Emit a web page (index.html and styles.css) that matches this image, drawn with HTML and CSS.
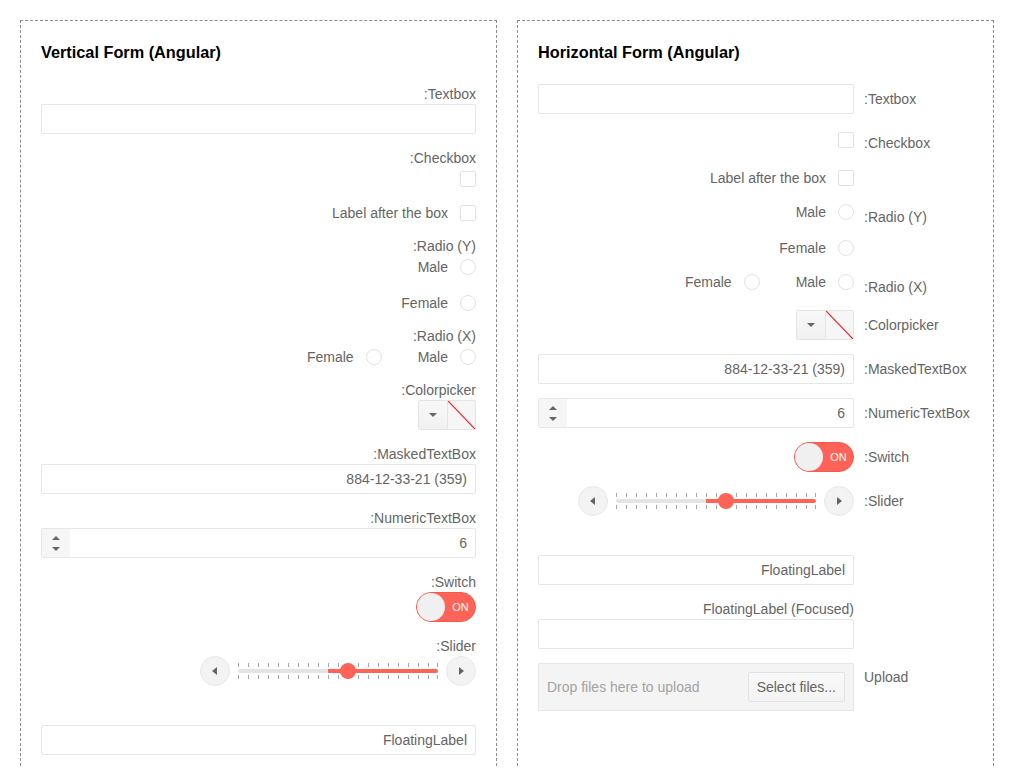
FILE: index.html
```html
<!DOCTYPE html>
<html lang="en">
<head>
<meta charset="utf-8">
<title>Forms (Angular)</title>
<link rel="stylesheet" href="styles.css">
</head>
<body>
<div class="page">

  <section class="panel">
    <h2 class="title">Vertical Form (Angular)</h2>

    <div class="vfield vfield-first">
      <div class="flabel">:Textbox</div>
      <div class="textbox"></div>
    </div>

    <div class="vfield">
      <div class="flabel">:Checkbox</div>
      <div class="choice choice-box"><span class="checkbox"></span></div>
      <div class="choice choice-after"><span>Label after the box</span><span class="checkbox"></span></div>
    </div>

    <div class="vfield vfield-tight">
      <div class="flabel">:Radio (Y)</div>
      <div class="choice choice-first"><span>Male</span><span class="radio"></span></div>
      <div class="choice choice-next"><span>Female</span><span class="radio"></span></div>
    </div>

    <div class="vfield vfield-tight">
      <div class="flabel">:Radio (X)</div>
      <div class="choice-group choice-first">
        <div class="choice"><span>Female</span><span class="radio"></span></div>
        <div class="choice"><span>Male</span><span class="radio"></span></div>
      </div>
    </div>

    <div class="vfield vfield-tight">
      <div class="flabel">:Colorpicker</div>
      <div class="colorpicker">
        <span class="cp-button"><span class="tri-down"></span></span>
        <span class="cp-preview"><svg class="no-color" viewBox="0 0 27 28" preserveAspectRatio="none"><line x1="0" y1="0" x2="27" y2="28" stroke="#ff1a1a" stroke-width="1.2"/></svg></span>
      </div>
    </div>

    <div class="vfield">
      <div class="flabel">:MaskedTextBox</div>
      <div class="textbox">884-12-33-21 (359)</div>
    </div>

    <div class="vfield">
      <div class="flabel">:NumericTextBox</div>
      <div class="numeric">
        <span class="spin"><span class="tri-up"></span><span class="tri-down"></span></span>
        <span class="num-value">6</span>
      </div>
    </div>

    <div class="vfield">
      <div class="flabel">:Switch</div>
      <span class="switch"><span class="knob"></span><span class="switch-label">ON</span></span>
    </div>

    <div class="vfield">
      <div class="flabel">:Slider</div>
      <div class="slider">
        <span class="sbtn"><span class="tri-left"></span></span>
        <div class="strack">
          <div class="ticks"></div>
          <div class="rail"><span class="thumb"></span></div>
          <div class="ticks"></div>
        </div>
        <span class="sbtn"><span class="tri-right"></span></span>
      </div>
    </div>

    <div class="vfield floating">
      <div class="textbox">FloatingLabel</div>
    </div>
  </section>

  <section class="panel">
    <h2 class="title">Horizontal Form (Angular)</h2>

    <div class="hrow hrow-first">
      <div class="hctrl"><div class="textbox"></div></div>
      <div class="hlabel">:Textbox</div>
    </div>

    <div class="hrow">
      <div class="hctrl">
        <span class="checkbox hchk"></span>
        <div class="choice hchoice-after"><span>Label after the box</span><span class="checkbox"></span></div>
      </div>
      <div class="hlabel">:Checkbox</div>
    </div>

    <div class="hrow">
      <div class="hctrl">
        <div class="choice"><span>Male</span><span class="radio"></span></div>
        <div class="choice choice-next"><span>Female</span><span class="radio"></span></div>
      </div>
      <div class="hlabel">:Radio (Y)</div>
    </div>

    <div class="hrow">
      <div class="hctrl">
        <div class="choice-group">
          <div class="choice"><span>Female</span><span class="radio"></span></div>
          <div class="choice"><span>Male</span><span class="radio"></span></div>
        </div>
      </div>
      <div class="hlabel">:Radio (X)</div>
    </div>

    <div class="hrow hrow-tight">
      <div class="hctrl">
        <div class="colorpicker">
          <span class="cp-button"><span class="tri-down"></span></span>
          <span class="cp-preview"><svg class="no-color" viewBox="0 0 27 28" preserveAspectRatio="none"><line x1="0" y1="0" x2="27" y2="28" stroke="#ff1a1a" stroke-width="1.2"/></svg></span>
        </div>
      </div>
      <div class="hlabel">:Colorpicker</div>
    </div>

    <div class="hrow">
      <div class="hctrl"><div class="textbox">884-12-33-21 (359)</div></div>
      <div class="hlabel">:MaskedTextBox</div>
    </div>

    <div class="hrow">
      <div class="hctrl">
        <div class="numeric">
          <span class="spin"><span class="tri-up"></span><span class="tri-down"></span></span>
          <span class="num-value">6</span>
        </div>
      </div>
      <div class="hlabel">:NumericTextBox</div>
    </div>

    <div class="hrow">
      <div class="hctrl">
        <span class="switch"><span class="knob"></span><span class="switch-label">ON</span></span>
      </div>
      <div class="hlabel">:Switch</div>
    </div>

    <div class="hrow">
      <div class="hctrl">
        <div class="slider">
          <span class="sbtn"><span class="tri-left"></span></span>
          <div class="strack">
            <div class="ticks"></div>
            <div class="rail"><span class="thumb"></span></div>
            <div class="ticks"></div>
          </div>
          <span class="sbtn"><span class="tri-right"></span></span>
        </div>
      </div>
      <div class="hlabel">:Slider</div>
    </div>

    <div class="hrow">
      <div class="hctrl floating"><div class="textbox">FloatingLabel</div></div>
      <div class="hlabel"></div>
    </div>

    <div class="hrow">
      <div class="hctrl">
        <div class="flabel">FloatingLabel (Focused)</div>
        <div class="textbox"></div>
      </div>
      <div class="hlabel"></div>
    </div>

    <div class="hrow">
      <div class="hctrl">
        <div class="upload"><span class="hint">Drop files here to upload</span><span class="btn">Select files...</span></div>
      </div>
      <div class="hlabel hlabel-upload">Upload</div>
    </div>
  </section>

</div>
</body>
</html>
```

FILE: styles.css
```css
* { box-sizing: border-box; }

html { margin: 0; }

body {
  margin: 20px;
  font-family: "Liberation Sans", Arial, Helvetica, sans-serif;
  font-size: 14px;
  line-height: 20px;
  color: #656565;
  background: #fff;
}

.page {
  display: flex;
  gap: 20px;
  align-items: stretch;
}

.panel {
  width: 477px;
  flex: none;
  border: 1px dashed #8c8c8c;
  padding: 20px;
}

.title {
  margin: 0;
  font-size: 16.3px;
  line-height: 20px;
  font-weight: bold;
  color: #000;
  padding-top: 1px;
  height: 20px;
}

/* ---------- vertical form ---------- */
.vfield {
  margin-top: 14px;
  display: flex;
  flex-direction: column;
  align-items: flex-end;
}
.vfield-first { margin-top: 23px; }
.vfield-tight { margin-top: 13px; }

.flabel { line-height: 20px; white-space: nowrap; }

.choice {
  display: flex;
  align-items: center;
  justify-content: flex-end;
  gap: 12px;
  height: 20px;
  white-space: nowrap;
}
.choice-box { height: 22px; }
.choice-after { margin-top: 13px; }
.choice-first { margin-top: 1px; }
.choice-next { margin-top: 16px; }

.choice-group {
  display: flex;
  gap: 36px;
}

.floating { padding-top: 25px; }

/* ---------- horizontal form ---------- */
.hrow {
  display: flex;
  gap: 10px;
  margin-top: 14px;
}
.hrow-first { margin-top: 23px; }
.hrow-tight { margin-top: 13px; }

.hctrl {
  width: 316px;
  flex: none;
  display: flex;
  flex-direction: column;
  align-items: flex-end;
}
.hlabel {
  padding-top: 5px;
  line-height: 20px;
  white-space: nowrap;
}
.hlabel-upload { padding-top: 4px; }

.hchk { margin-top: 4px; }
.hchoice-after { margin-top: 20px; }

/* ---------- controls ---------- */
.textbox, .numeric, .upload { align-self: stretch; }

.textbox {
  height: 30px;
  border: 1px solid #e6e6e6;
  border-radius: 2px;
  background: #fff;
  padding: 0 8px;
  line-height: 28px;
  text-align: right;
}

.checkbox {
  display: block;
  width: 16px;
  height: 16px;
  flex: none;
  border: 1px solid #e2e2e2;
  border-radius: 2px;
  background: #fff;
}

.radio {
  display: block;
  width: 16px;
  height: 16px;
  flex: none;
  border: 1px solid #e2e2e2;
  border-radius: 50%;
  background: #fff;
}

.colorpicker {
  display: flex;
  height: 30px;
  width: 58px;
  border: 1px solid #e4e4e4;
  border-radius: 2px;
  background: #f6f6f6;
}
.cp-button {
  width: 28px;
  display: flex;
  align-items: center;
  justify-content: center;
  background: linear-gradient(#f8f8f8, #f1f1f1);
}
.cp-preview {
  flex: 1;
  border-left: 1px solid #e4e4e4;
  background: #f6f6f6;
  display: flex;
}
.no-color { width: 100%; height: 100%; display: block; }

.tri-down, .tri-up, .tri-left, .tri-right {
  display: block;
  width: 0;
  height: 0;
}
.tri-down {
  border-left: 4px solid transparent;
  border-right: 4px solid transparent;
  border-top: 4px solid #656565;
}
.tri-up {
  border-left: 4px solid transparent;
  border-right: 4px solid transparent;
  border-bottom: 4px solid #656565;
}
.tri-left {
  border-top: 4px solid transparent;
  border-bottom: 4px solid transparent;
  border-right: 5px solid #656565;
  margin-right: 1px;
}
.tri-right {
  border-top: 4px solid transparent;
  border-bottom: 4px solid transparent;
  border-left: 5px solid #656565;
  margin-left: 1px;
}

.numeric {
  display: flex;
  height: 30px;
  border: 1px solid #e6e6e6;
  border-radius: 2px;
  background: #fff;
}
.spin {
  width: 28px;
  background: #f6f6f6;
  display: flex;
  flex-direction: column;
  align-items: center;
  justify-content: center;
  gap: 7px;
}
.num-value {
  flex: 1;
  text-align: right;
  padding: 0 8px;
  line-height: 28px;
}

.switch {
  display: flex;
  align-items: center;
  width: 60px;
  height: 30px;
  border: 1px solid #f55a4f;
  border-radius: 15px;
  background: #ff6358;
}
.knob {
  width: 28px;
  height: 28px;
  border-radius: 50%;
  background: #f0f0f0;
  flex: none;
}
.switch-label {
  flex: 1;
  text-align: center;
  color: #fff;
  font-size: 11px;
  line-height: 14px;
  padding-left: 1px;
}

.slider {
  display: flex;
  align-items: center;
  gap: 8px;
  height: 30px;
}
.sbtn {
  width: 30px;
  height: 30px;
  flex: none;
  border-radius: 50%;
  border: 1px solid #e8e8e8;
  background: #f3f3f3;
  display: flex;
  align-items: center;
  justify-content: center;
}
.strack {
  width: 200px;
  height: 30px;
  padding-top: 7px;
  display: flex;
  flex-direction: column;
  gap: 2px;
}
.ticks {
  height: 4px;
  background:
    linear-gradient(#a6a6a6, #a6a6a6) right top / 1px 100% no-repeat,
    repeating-linear-gradient(to right, #a6a6a6 0 1px, transparent 1px 10px);
}
.rail {
  position: relative;
  height: 4px;
  border-radius: 2px;
  background: linear-gradient(to right, #e4e4e4 0 90px, #ff6358 90px 100%);
}
.thumb {
  position: absolute;
  left: 102px;
  top: -6px;
  width: 16px;
  height: 16px;
  border-radius: 50%;
  background: #ff6358;
}

.upload {
  height: 48px;
  border: 1px solid #e8e8e8;
  background: #f4f4f4;
  padding: 0 8px;
  display: flex;
  align-items: center;
  justify-content: space-between;
}
.hint { color: #a3a3a3; white-space: nowrap; }
.btn {
  height: 30px;
  padding: 0 8px;
  border: 1px solid #e2e2e2;
  border-radius: 2px;
  background: linear-gradient(#f9f9f9, #f3f3f3);
  line-height: 28px;
  color: #656565;
  white-space: nowrap;
}
```
